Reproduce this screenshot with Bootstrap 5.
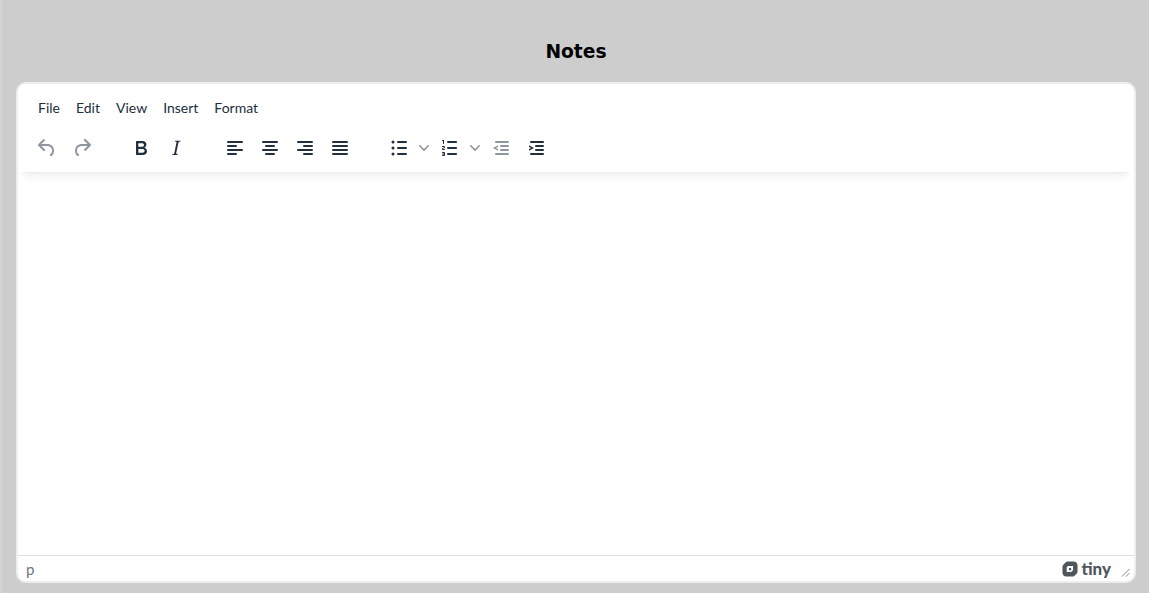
<!DOCTYPE html>
<html lang="en">
<head>
  <meta charset="UTF-8" />
  <meta name="viewport" content="width=device-width, initial-scale=1.0"/>
  <title>Notes</title>
  <link href="https://cdn.jsdelivr.net/npm/bootstrap@5.3.0/dist/css/bootstrap.min.css" rel="stylesheet"/>
  <style>
    html, body { height: 100%; }
    body {
      background-color: #cdcdcd;
      font-family: Lato, "Open Sans", sans-serif;
      overflow: hidden;
      border-left: 2px solid #d3d3d3;
      padding: 0 13px 11px 14px;
    }
    .page-title {
      font-family: "DejaVu Sans", Verdana, sans-serif;
      font-size: 18.7px;
      font-weight: 700;
      line-height: 24px;
      color: #000;
      text-align: center;
      padding-top: 40px;
      margin: 0 0 18px;
    }
    .editor-box {
      background: #fff;
      border: 2px solid #eee;
      border-radius: 10px;
      overflow: hidden;
    }
    .editor-head {
      box-shadow: 0 2px 2px -2px rgba(34,47,62,.1), 0 8px 8px -4px rgba(34,47,62,.07);
      margin: 0 3px 0 2px;
      height: 88px;
    }
    .menu-row { height: 46px; padding: 2px 0 0 18px; gap: 16px; }
    .menu-item { font-size: 14px; line-height: 20px; color: #222f3e; }
    .tool-row { height: 35px; padding-left: 9px; }
    .tool-btn {
      width: 35px;
      height: 35px;
      flex: none;
    }
    .tool-btn svg { width: 24px; height: 24px; fill: #222f3e; }
    .tool-btn.is-off svg { opacity: .5; }
    .tool-sep { width: 24px; flex: none; }
    .tool-sep.wide { width: 26px; }
    .chev-btn { width: 15px; height: 35px; flex: none; margin-left: 1px; }
    .chev-btn svg { width: 10px; height: 10px; fill: #222f3e; opacity: .5; }
    .split-btn { width: 32px; }
    .num-btn { margin-left: 3px; }
    .outdent-btn { margin-left: 1px; }
    .editor-area { height: 383px; }
    .status-row {
      height: 26px;
      border-top: 1px solid #e0e0e0;
      padding: 0 4px 0 8px;
      color: #6d7680;
    }
    .status-path { line-height: 26px; font-size: 15px; }
    .tiny-word {
      font-family: Lato, sans-serif;
      font-size: 17px;
      font-weight: 900;
      line-height: 26px;
      color: #50565c;
      margin-left: 3px;
    }
    .tiny-mark { width: 16px; height: 16px; margin-top: 1px; }
    .grip { width: 9px; height: 9px; margin-left: 10px; margin-top: 8px; }
  </style>
</head>
<body>
  <h1 class="page-title">Notes</h1>

  <div class="editor-box d-flex flex-column">
    <div class="editor-head">
      <div class="menu-row d-flex align-items-center">
        <span class="menu-item">File</span>
        <span class="menu-item">Edit</span>
        <span class="menu-item">View</span>
        <span class="menu-item">Insert</span>
        <span class="menu-item">Format</span>
      </div>
      <div class="tool-row d-flex align-items-center">
        <div class="tool-btn is-off d-flex align-items-center justify-content-center">
          <svg viewBox="0 0 24 24"><path d="M6.4 8H12c3.7 0 6.2 2 6.8 5.1.6 2.7-.4 5.6-2.3 6.8a1 1 0 0 1-1-1.8c1.1-.6 1.8-2.7 1.4-4.6-.5-2.1-2.1-3.5-4.9-3.5H6.4l3.3 3.3a1 1 0 1 1-1.4 1.4l-5-5a1 1 0 0 1 0-1.4l5-5a1 1 0 0 1 1.4 1.4L6.4 8Z"/></svg>
        </div>
        <div class="tool-btn is-off d-flex align-items-center justify-content-center">
          <svg viewBox="0 0 24 24"><path d="M17.6 10H12c-2.8 0-4.4 1.4-4.9 3.5-.4 2 .3 4 1.4 4.6a1 1 0 1 1-1 1.8c-2-1.2-2.9-4.1-2.3-6.8.6-3 3-5.1 6.8-5.1h5.6l-3.3-3.3a1 1 0 1 1 1.4-1.4l5 5a1 1 0 0 1 0 1.4l-5 5a1 1 0 0 1-1.4-1.4l3.3-3.3Z"/></svg>
        </div>
        <div class="tool-sep"></div>
        <div class="tool-btn d-flex align-items-center justify-content-center">
          <svg viewBox="0 0 24 24"><path d="M7.8 19c-.3 0-.5 0-.6-.2l-.2-.5V5.7c0-.2 0-.4.2-.5l.6-.2h5c1.5 0 2.7.3 3.5 1 .7.6 1.1 1.4 1.1 2.5a3 3 0 0 1-.6 1.9c-.4.6-1 1-1.6 1.2.4.1.9.3 1.3.6s.8.7 1 1.2c.4.4.5 1 .5 1.6 0 1.3-.4 2.3-1.3 3-.8.7-2.1 1-3.8 1H7.8Zm5-8.3c.6 0 1.2-.1 1.6-.5.4-.3.6-.7.6-1.3 0-1.1-.8-1.7-2.3-1.7H9.3v3.5h3.4Zm.5 6c.7 0 1.3-.1 1.7-.4.4-.4.6-.9.6-1.5s-.2-1-.7-1.4c-.4-.3-1-.4-2-.4H9.4v3.8h4Z"/></svg>
        </div>
        <div class="tool-btn d-flex align-items-center justify-content-center">
          <svg viewBox="0 0 24 24"><path d="M16.7 4.7l-.1.9h-.3c-.6 0-1 0-1.4.3-.3.3-.4.6-.5 1.1l-2.1 9.8v.6c0 .5.4.8 1.4.8h.2l-.2.8H8l.2-.8h.2c1.1 0 1.8-.5 2-1.5l2-9.8.1-.5c0-.6-.4-.8-1.4-.8h-.3l.2-.9h5.8Z"/></svg>
        </div>
        <div class="tool-sep"></div>
        <div class="tool-btn d-flex align-items-center justify-content-center">
          <svg viewBox="0 0 24 24"><path d="M5 5h14a1 1 0 0 1 0 2H5a1 1 0 1 1 0-2Zm0 4h8a1 1 0 0 1 0 2H5a1 1 0 1 1 0-2Zm0 8h8a1 1 0 0 1 0 2H5a1 1 0 0 1 0-2Zm0-4h14a1 1 0 0 1 0 2H5a1 1 0 0 1 0-2Z"/></svg>
        </div>
        <div class="tool-btn d-flex align-items-center justify-content-center">
          <svg viewBox="0 0 24 24"><path d="M5 5h14a1 1 0 0 1 0 2H5a1 1 0 1 1 0-2Zm3 4h8a1 1 0 0 1 0 2H8a1 1 0 1 1 0-2Zm0 8h8a1 1 0 0 1 0 2H8a1 1 0 0 1 0-2Zm-3-4h14a1 1 0 0 1 0 2H5a1 1 0 0 1 0-2Z"/></svg>
        </div>
        <div class="tool-btn d-flex align-items-center justify-content-center">
          <svg viewBox="0 0 24 24"><path d="M5 5h14a1 1 0 0 1 0 2H5a1 1 0 1 1 0-2Zm6 4h8a1 1 0 0 1 0 2h-8a1 1 0 0 1 0-2Zm0 8h8a1 1 0 0 1 0 2h-8a1 1 0 0 1 0-2Zm-6-4h14a1 1 0 0 1 0 2H5a1 1 0 0 1 0-2Z"/></svg>
        </div>
        <div class="tool-btn d-flex align-items-center justify-content-center">
          <svg viewBox="0 0 24 24"><path d="M5 5h14a1 1 0 0 1 0 2H5a1 1 0 1 1 0-2Zm0 4h14a1 1 0 0 1 0 2H5a1 1 0 1 1 0-2Zm0 4h14a1 1 0 0 1 0 2H5a1 1 0 0 1 0-2Zm0 4h14a1 1 0 0 1 0 2H5a1 1 0 0 1 0-2Z"/></svg>
        </div>
        <div class="tool-sep wide"></div>
        <div class="tool-btn split-btn d-flex align-items-center justify-content-center">
          <svg viewBox="0 0 24 24"><path d="M11 5h8a1 1 0 0 1 0 2h-8a1 1 0 0 1 0-2Zm0 6h8a1 1 0 0 1 0 2h-8a1 1 0 0 1 0-2Zm0 6h8a1 1 0 0 1 0 2h-8a1 1 0 0 1 0-2Z"/><circle cx="6" cy="6" r="1.5"/><circle cx="6" cy="12" r="1.5"/><circle cx="6" cy="18" r="1.5"/></svg>
        </div>
        <div class="chev-btn d-flex align-items-center justify-content-center">
          <svg viewBox="0 0 10 10"><path d="M8.7 2.2c.3-.3.8-.3 1 0 .4.2.4.7 0 1L5.6 7.8c-.3.3-.9.3-1.2 0L.2 3.2c-.3-.3-.3-.8 0-1 .3-.3.8-.3 1.1 0L5 6l3.7-3.8Z"/></svg>
        </div>
        <div class="tool-btn split-btn num-btn d-flex align-items-center justify-content-center">
          <svg viewBox="0 0 24 24"><path d="M10 17h8c.6 0 1 .4 1 1s-.4 1-1 1h-8a1 1 0 0 1 0-2Zm0-6h8c.6 0 1 .4 1 1s-.4 1-1 1h-8a1 1 0 0 1 0-2Zm0-6h8c.6 0 1 .4 1 1s-.4 1-1 1h-8a1 1 0 1 1 0-2ZM6 4v3.500c0 .3-.2.5-.5.5a.5.5 0 0 1-.5-.5V5h-.5a.5.5 0 0 1 0-1H6Zm-1 8.800.2.2h1.300c.3 0 .5.2.5.5s-.2.5-.5.5H4.900a1 1 0 0 1-.9-1V13c0-.4.3-.8.6-1l1.200-.4.2-.3a.2.2 0 0 0-.2-.2H4.500a.5.5 0 0 1-.5-.5c0-.3.2-.5.5-.5h1.600c.5 0 .9.4.9 1v.1c0 .4-.3.8-.6 1l-1.200.4-.2.3ZM7 17v2c0 .6-.4 1-1 1H4.500a.5.5 0 0 1 0-1h1.200c.2 0 .3-.1.3-.3 0-.2-.1-.3-.3-.3H4.400a.4.4 0 1 1 0-.8h1.300c.2 0 .3-.1.3-.3 0-.2-.1-.3-.3-.3H4.500a.5.5 0 1 1 0-1H6c.6 0 1 .4 1 1Z"/></svg>
        </div>
        <div class="chev-btn d-flex align-items-center justify-content-center">
          <svg viewBox="0 0 10 10"><path d="M8.7 2.2c.3-.3.8-.3 1 0 .4.2.4.7 0 1L5.6 7.8c-.3.3-.9.3-1.2 0L.2 3.2c-.3-.3-.3-.8 0-1 .3-.3.8-.3 1.1 0L5 6l3.7-3.8Z"/></svg>
        </div>
        <div class="tool-btn is-off outdent-btn d-flex align-items-center justify-content-center">
          <svg viewBox="0 0 24 24"><path d="M7 5h12a1 1 0 0 1 0 2H7a1 1 0 1 1 0-2Zm5 4h7a1 1 0 0 1 0 2h-7a1 1 0 0 1 0-2Zm0 4h7a1 1 0 0 1 0 2h-7a1 1 0 0 1 0-2Zm-5 4h12a1 1 0 0 1 0 2H7a1 1 0 0 1 0-2ZM9 9.200v1.700L6.800 12 9 13.100v1.700L4 12l5-2.800Z"/></svg>
        </div>
        <div class="tool-btn d-flex align-items-center justify-content-center">
          <svg viewBox="0 0 24 24"><path d="M7 5h12a1 1 0 0 1 0 2H7a1 1 0 1 1 0-2Zm5 4h7a1 1 0 0 1 0 2h-7a1 1 0 0 1 0-2Zm0 4h7a1 1 0 0 1 0 2h-7a1 1 0 0 1 0-2Zm-5 4h12a1 1 0 0 1 0 2H7a1 1 0 0 1 0-2ZM5 9.200 10 12l-5 2.800v-1.700L7.200 12 5 10.900V9.200Z"/></svg>
        </div>
      </div>
    </div>

    <div class="editor-area"></div>

    <div class="status-row d-flex align-items-center justify-content-between">
      <span class="status-path">p</span>
      <div class="d-flex align-items-center">
        <svg class="tiny-mark" viewBox="0 0 17 17"><path fill="#50565c" fill-rule="evenodd" d="M6 .6h6.500c2.200 0 4 1.800 4 4v6.600c0 .9-.4 1.700-1 2.300l-2.200 2.100c-.6.6-1.400.9-2.200.9H4.500c-2.200 0-4-1.800-4-4V6.100c0-.9.3-1.600.9-2.200L3.700 1.500C4.300.9 5.100.6 6 .6ZM6.300 5.400 5 6.700v4.900h4.800l1.900-1.700V5.400H6.300Z"/><path fill="#50565c" d="M7.400 7.400h2.300v2.300H7.400z"/></svg>
        <span class="tiny-word">tiny</span>
        <svg class="grip" viewBox="0 0 10 10"><path d="M1 9.500 9.500 1M5.500 9.500l4-4" stroke="#7a8087" stroke-width="1" fill="none"/></svg>
      </div>
    </div>
  </div>

  <script src="https://cdn.jsdelivr.net/npm/bootstrap@5.3.0/dist/js/bootstrap.bundle.min.js"></script>
</body>
</html>
